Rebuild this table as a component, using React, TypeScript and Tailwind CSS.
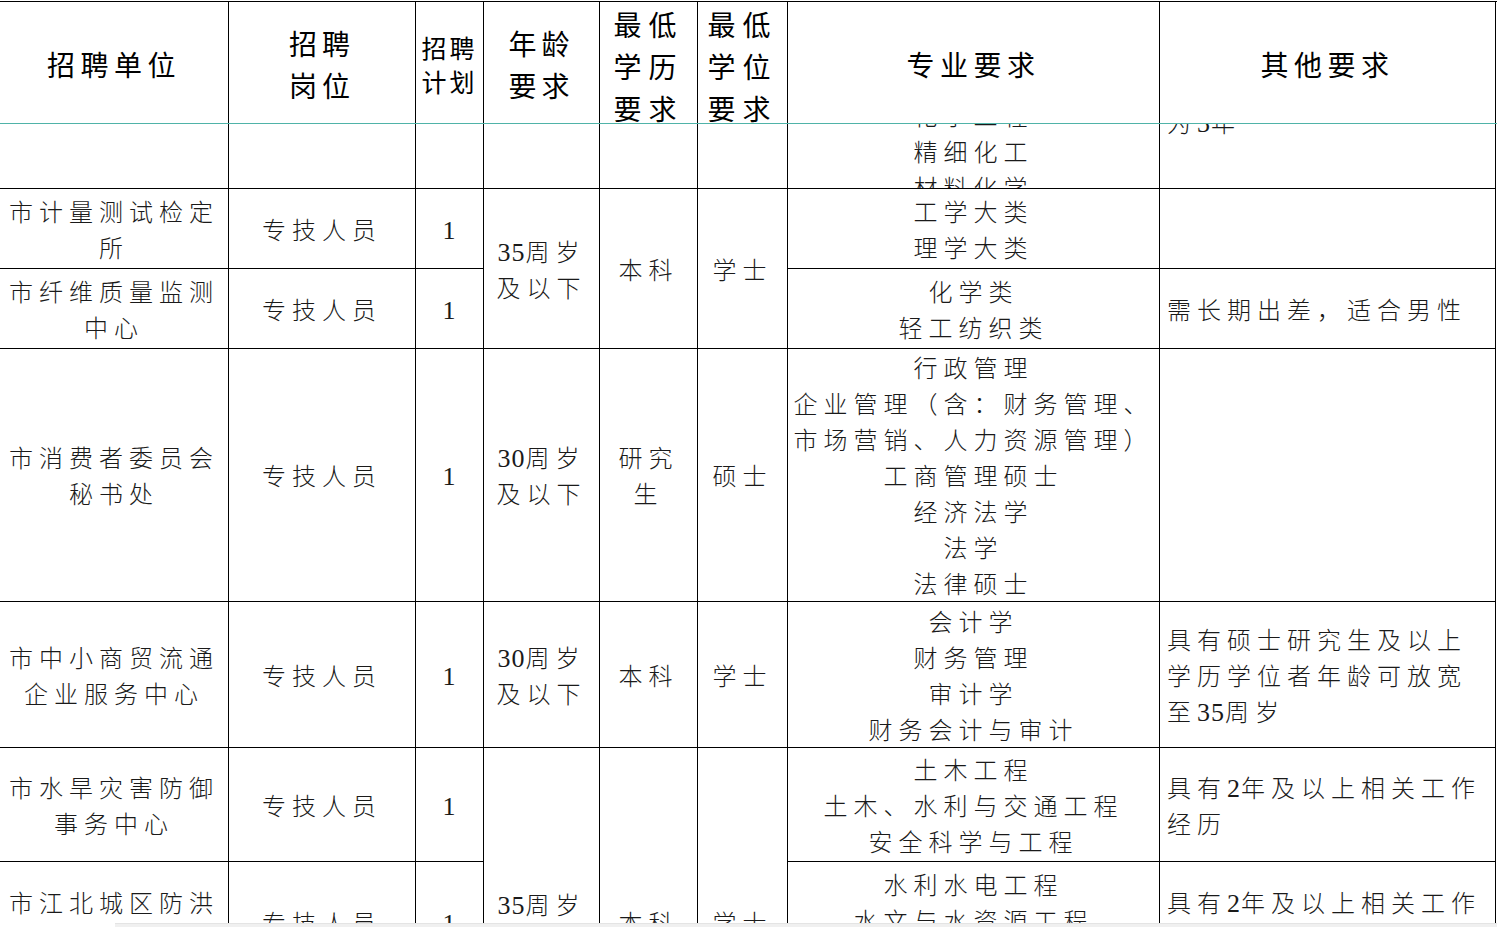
import React from 'react';

const GRID_COLS = 'grid grid-cols-[229px_187px_68px_116px_98px_90px_372px_336px]';

// digits in the sheet are set tight and a little taller than the CJK text
const renderLine = (line: string) =>
  line.split(/(\d+)/).map((part, i) =>
    /^\d+$/.test(part) ? (
      <span key={i} className="text-[26px] tracking-[1px]">
        {part}
      </span>
    ) : (
      <React.Fragment key={i}>{part}</React.Fragment>
    ),
  );

type CellProps = {
  lines?: string[];
  left?: boolean;
  className?: string;
};

const Cell = ({ lines = [], left = false, className = '' }: CellProps) => (
  <div
    className={`flex flex-col justify-center overflow-hidden border-b border-r border-black pt-1 ${
      left ? 'items-start pl-[7px]' : 'items-center text-center'
    } ${className}`}
  >
    {lines.map((line, i) => (
      <span key={i} className="block whitespace-nowrap">
        {renderLine(line)}
      </span>
    ))}
  </div>
);

const HeadCell = ({ lines, className = '' }: { lines: string[]; className?: string }) => (
  <div className={`flex flex-col items-center justify-center overflow-hidden border-r border-black text-center ${className}`}>
    {lines.map((line, i) => (
      <span key={i} className="block whitespace-nowrap">
        {line}
      </span>
    ))}
  </div>
);

const App = () => {
  const big = 'text-[28px] leading-[42px]';

  return (
    <div className="relative h-[927px] w-[1497px] overflow-hidden bg-white pt-px font-['Liberation_Serif','Noto_Sans_CJK_SC',serif] text-[#1a1a1a]">
      {/* frozen header */}
      <div className={`${GRID_COLS} h-[123px] border-t border-b border-t-black border-b-[#4fb3a8] text-black`}>
        <HeadCell lines={['招聘单位']} className={`${big} pt-2 tracking-[5.5px]`} />
        <HeadCell lines={['招聘', '岗位']} className={`${big} pt-2 tracking-[5px]`} />
        <HeadCell lines={['招聘', '计划']} className="pt-2 text-[25px] leading-[34px] tracking-[3px]" />
        <HeadCell lines={['年龄', '要求']} className={`${big} pt-2 tracking-[5px]`} />
        <HeadCell lines={['最低', '学历', '要求']} className={`${big} pt-[12px] tracking-[7px]`} />
        <HeadCell lines={['最低', '学位', '要求']} className={`${big} pt-[12px] tracking-[7px]`} />
        <HeadCell lines={['专业要求']} className={`${big} pt-2 tracking-[5.5px]`} />
        <HeadCell lines={['其他要求']} className={`${big} pt-2 tracking-[5.5px]`} />
      </div>

      {/* scrolled body */}
      <div
        className={`${GRID_COLS} grid-rows-[65px_80px_80px_253px_146px_114px_120px_114px] text-[24px] font-light leading-[36px] tracking-[6px]`}
      >
        {/* row cut by the frozen pane */}
        <Cell />
        <Cell />
        <Cell />
        <Cell />
        <Cell />
        <Cell />
        <div className="flex flex-col items-center justify-start overflow-hidden border-b border-r border-black text-center">
          <div className="mt-[-25px]">
            <span className="block whitespace-nowrap">化学工程</span>
            <span className="block whitespace-nowrap">精细化工</span>
            <span className="block whitespace-nowrap">材料化学</span>
          </div>
        </div>
        <div className="flex flex-col items-start justify-start overflow-hidden border-b border-r border-black pl-[7px]">
          <div className="mt-[-18px]">
            <span className="block whitespace-nowrap">{renderLine('为3年')}</span>
          </div>
        </div>

        <Cell lines={['市计量测试检定', '所']} />
        <Cell lines={['专技人员']} />
        <Cell lines={['1']} />
        <Cell lines={['35周岁', '及以下']} className="row-span-2" />
        <Cell lines={['本科']} className="row-span-2" />
        <Cell lines={['学士']} className="row-span-2" />
        <Cell lines={['工学大类', '理学大类']} />
        <Cell left />

        <Cell lines={['市纤维质量监测', '中心']} />
        <Cell lines={['专技人员']} />
        <Cell lines={['1']} />
        <Cell lines={['化学类', '轻工纺织类']} />
        <Cell left lines={['需长期出差，适合男性']} />

        <Cell lines={['市消费者委员会', '秘书处']} />
        <Cell lines={['专技人员']} />
        <Cell lines={['1']} />
        <Cell lines={['30周岁', '及以下']} />
        <Cell lines={['研究', '生']} />
        <Cell lines={['硕士']} />
        <Cell
          lines={[
            '行政管理',
            '企业管理（含：财务管理、',
            '市场营销、人力资源管理）',
            '工商管理硕士',
            '经济法学',
            '法学',
            '法律硕士',
          ]}
        />
        <Cell left />

        <Cell lines={['市中小商贸流通', '企业服务中心']} />
        <Cell lines={['专技人员']} />
        <Cell lines={['1']} />
        <Cell lines={['30周岁', '及以下']} />
        <Cell lines={['本科']} />
        <Cell lines={['学士']} />
        <Cell lines={['会计学', '财务管理', '审计学', '财务会计与审计']} />
        <Cell left lines={['具有硕士研究生及以上', '学历学位者年龄可放宽', '至35周岁']} />

        <Cell lines={['市水旱灾害防御', '事务中心']} />
        <Cell lines={['专技人员']} />
        <Cell lines={['1']} />
        <Cell lines={['35周岁', '及以下']} className="row-span-3" />
        <Cell lines={['本科']} className="row-span-3" />
        <Cell lines={['学士']} className="row-span-3" />
        <Cell lines={['土木工程', '土木、水利与交通工程', '安全科学与工程']} />
        <Cell left lines={['具有2年及以上相关工作', '经历']} />

        <Cell lines={['市江北城区防洪', '工程管理中心']} className="pb-1" />
        <Cell lines={['专技人员']} />
        <Cell lines={['1']} />
        <Cell lines={['水利水电工程', '水文与水资源工程', '港口航道与海岸工程']} className="pb-1" />
        <Cell left lines={['具有2年及以上相关工作', '经历']} className="pb-1" />

        <Cell lines={['市防汛抗旱', '服务中心']} />
        <Cell lines={['专技人员']} />
        <Cell lines={['1']} />
        <Cell lines={['水利类']} />
        <Cell left />
      </div>

      {/* horizontal scrollbar strip */}
      <div className="absolute bottom-0 left-[115px] right-0 h-[4px] border-t border-[#e4e4e4] bg-[#f0f0f0]" />
    </div>
  );
};

export default App;
